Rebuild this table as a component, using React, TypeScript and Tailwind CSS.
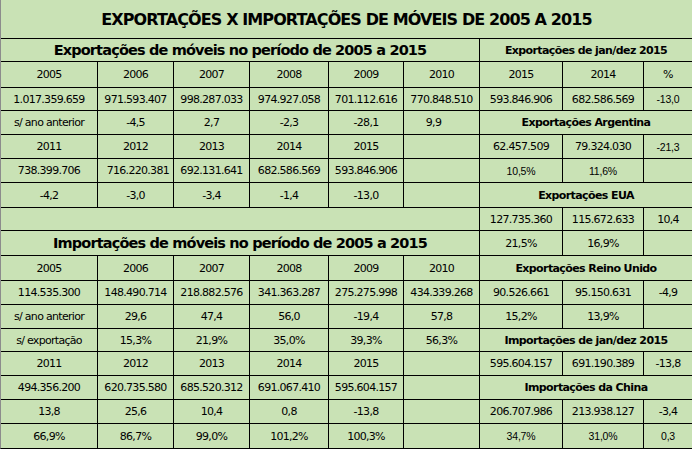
import React from "react";

type CellProps = {
  children?: React.ReactNode;
  className?: string;
};

function C({ children, className = "" }: CellProps) {
  return (
    <div
      className={`flex items-center justify-center bg-[#c9e2b5] whitespace-nowrap pt-[2px] ${className}`}
    >
      {children}
    </div>
  );
}

const small = "text-[10.5px] font-['Liberation_Sans',sans-serif] tracking-[-0.2px]";
const head = "col-span-3 font-bold tracking-[-0.6px]";
const sec = "col-span-6 text-[14.5px] font-bold tracking-[-0.85px]";

function Row({ cells }: { cells: (string | null)[] }) {
  return (
    <>
      {cells.map((c, i) => (
        <C key={i}>{c}</C>
      ))}
    </>
  );
}

export default function App() {
  return (
    <div className="w-[692px] min-h-screen bg-white">
      <div className="grid w-[692px] grid-cols-[96px_75px_75px_78px_74px_75px_82px_80px_48px] grid-rows-[38px_22px_25px_22px_23px_23px_23px_24px_22px_24px_24px_23px_23px_22px_23px_23px_23px_24px] gap-px bg-black border-l border-l-[#8c8c8c] border-b border-b-black font-['DejaVu_Sans',sans-serif] text-[11px] tracking-[-0.7px] text-black">
        {/* Title */}
        <C className="col-span-9 text-[16px] font-bold tracking-[-0.9px] text-black pt-0">
          EXPORTAÇÕES X IMPORTAÇÕES DE MÓVEIS DE 2005 A 2015
        </C>

        {/* Row 1 */}
        <C className={sec}>Exportações de móveis no período de 2005 a 2015</C>
        <C className={head}>Exportações de jan/dez 2015</C>

        {/* Row 2 */}
        <Row cells={["2005", "2006", "2007", "2008", "2009", "2010", "2015", "2014", "%"]} />

        {/* Row 3 */}
        <Row
          cells={[
            "1.017.359.659",
            "971.593.407",
            "998.287.033",
            "974.927.058",
            "701.112.616",
            "770.848.510",
            "593.846.906",
            "682.586.569",
          ]}
        />
        <C className={small}>-13,0</C>

        {/* Row 4 */}
        <Row cells={["s/ ano anterior", "-4,5", "2,7", "-2,3", "-28,1"]} />
        <C className="pr-4">9,9</C>
        <C className={head}>Exportações Argentina</C>

        {/* Row 5 */}
        <Row cells={["2011", "2012", "2013", "2014", "2015", null, "62.457.509", "79.324.030"]} />
        <C className={small}>-21,3</C>

        {/* Row 6 */}
        <Row cells={["738.399.706"]} />
        <C className="justify-end pr-[4px]">716.220.381</C>
        <Row cells={["692.131.641", "682.586.569", "593.846.906", null]} />
        <C className={small}>10,5%</C>
        <C className={small}>11,6%</C>
        <C />

        {/* Row 7 */}
        <Row cells={["-4,2", "-3,0", "-3,4", "-1,4", "-13,0", null]} />
        <C className={head}>Exportações EUA</C>

        {/* Row 8 */}
        <C className="col-span-6" />
        <Row cells={["127.735.360", "115.672.633", "10,4"]} />

        {/* Row 9 */}
        <C className={sec}>Importações de móveis no período de 2005 a 2015</C>
        <Row cells={["21,5%", "16,9%", null]} />

        {/* Row 10 */}
        <Row cells={["2005", "2006", "2007", "2008", "2009", "2010"]} />
        <C className={head}>Exportações Reino Unido</C>

        {/* Row 11 */}
        <Row
          cells={[
            "114.535.300",
            "148.490.714",
            "218.882.576",
            "341.363.287",
            "275.275.998",
            "434.339.268",
            "90.526.661",
            "95.150.631",
            "-4,9",
          ]}
        />

        {/* Row 12 */}
        <Row cells={["s/ ano anterior", "29,6", "47,4", "56,0", "-19,4", "57,8", "15,2%", "13,9%", null]} />

        {/* Row 13 */}
        <Row cells={["s/ exportação", "15,3%", "21,9%", "35,0%", "39,3%", "56,3%"]} />
        <C className={head}>Importações de jan/dez 2015</C>

        {/* Row 14 */}
        <Row cells={["2011", "2012", "2013", "2014", "2015", null, "595.604.157", "691.190.389", "-13,8"]} />

        {/* Row 15 */}
        <Row cells={["494.356.200", "620.735.580", "685.520.312", "691.067.410", "595.604.157", null]} />
        <C className={head}>Importações da China</C>

        {/* Row 16 */}
        <Row cells={["13,8", "25,6", "10,4", "0,8", "-13,8", null, "206.707.986", "213.938.127", "-3,4"]} />

        {/* Row 17 */}
        <Row cells={["66,9%", "86,7%", "99,0%", "101,2%", "100,3%", null]} />
        <C className={small}>34,7%</C>
        <C className={small}>31,0%</C>
        <C className={small}>0,3</C>
      </div>
    </div>
  );
}
